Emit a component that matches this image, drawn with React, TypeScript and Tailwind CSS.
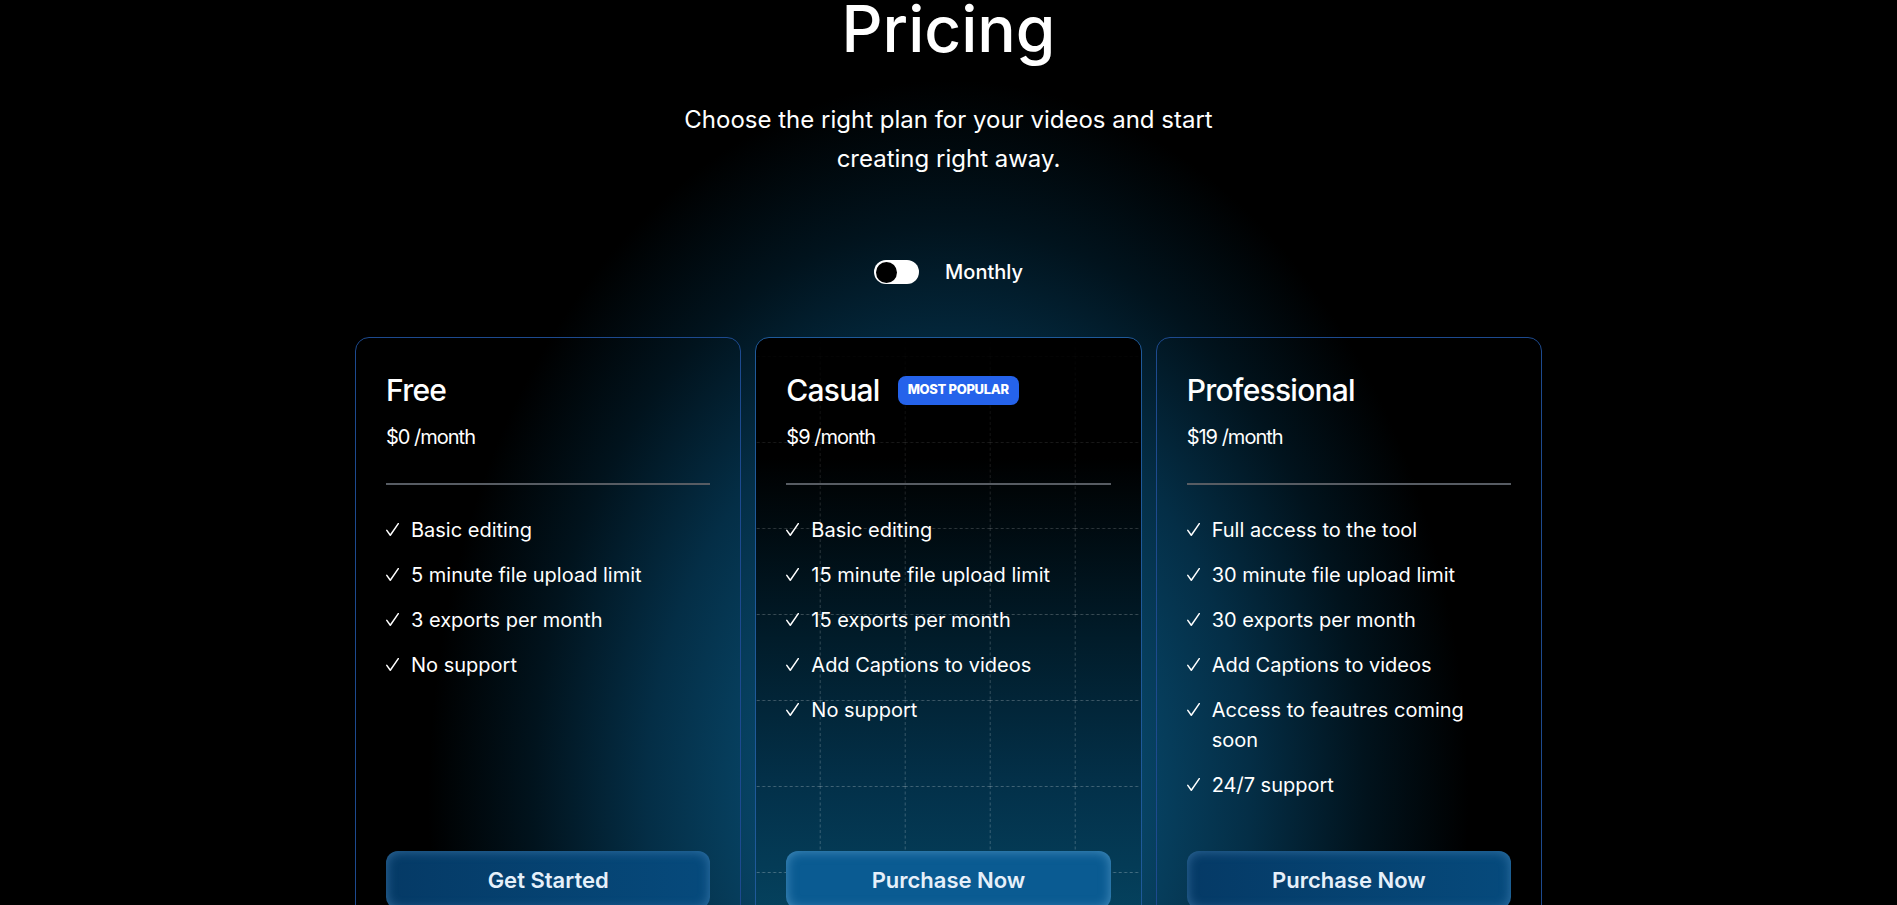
import React, { useState } from "react";

interface Plan {
  name: string;
  price: string;
  features: string[];
  cta: string;
  popular?: boolean;
}

const plans: Plan[] = [
  {
    name: "Free",
    price: "$0",
    features: [
      "Basic editing",
      "5 minute file upload limit",
      "3 exports per month",
      "No support",
    ],
    cta: "Get Started",
  },
  {
    name: "Casual",
    price: "$9",
    popular: true,
    features: [
      "Basic editing",
      "15 minute file upload limit",
      "15 exports per month",
      "Add Captions to videos",
      "No support",
    ],
    cta: "Purchase Now",
  },
  {
    name: "Professional",
    price: "$19",
    features: [
      "Full access to the tool",
      "30 minute file upload limit",
      "30 exports per month",
      "Add Captions to videos",
      "Access to feautres coming soon",
      "24/7 support",
    ],
    cta: "Purchase Now",
  },
];

function Check() {
  return (
    <svg
      width="13"
      height="13"
      viewBox="0 0 13 13"
      className="mt-[8px] mr-[12px] shrink-0"
      fill="none"
    >
      <path
        d="M0.8 7.4 L4.3 12.2 L12.3 0.6"
        stroke="white"
        strokeWidth="1.5"
        strokeLinecap="round"
        strokeLinejoin="round"
      />
    </svg>
  );
}

function GridBackdrop() {
  return (
    <svg className="pointer-events-none absolute inset-0 h-full w-full">
      <defs>
        <pattern
          id="casual-grid"
          width="85"
          height="86"
          x="63.7"
          y="18"
          patternUnits="userSpaceOnUse"
        >
          <line
            x1="0"
            y1="0"
            x2="85"
            y2="0"
            stroke="white"
            strokeOpacity="0.34"
            strokeWidth="1.3"
            strokeDasharray="3 2.5"
          />
          <line
            x1="0"
            y1="0"
            x2="0"
            y2="86"
            stroke="white"
            strokeOpacity="0.34"
            strokeWidth="1.3"
            strokeDasharray="3 2.5"
          />
        </pattern>
        <linearGradient id="grid-fade" x1="0" y1="0" x2="0" y2="1">
          <stop offset="0%" stopColor="white" stopOpacity="0" />
          <stop offset="14%" stopColor="white" stopOpacity="0.3" />
          <stop offset="40%" stopColor="white" stopOpacity="0.85" />
          <stop offset="100%" stopColor="white" stopOpacity="1" />
        </linearGradient>
        <mask id="grid-mask">
          <rect width="100%" height="100%" fill="url(#grid-fade)" />
        </mask>
      </defs>
      <rect
        width="100%"
        height="100%"
        fill="url(#casual-grid)"
        mask="url(#grid-mask)"
      />
    </svg>
  );
}

function PlanCard({ plan }: { plan: Plan }) {
  const featured = !!plan.popular;
  return (
    <div
      className={`relative flex h-[603px] flex-col overflow-hidden rounded-[14px] border px-[30px] pt-[34px] pb-[30px] ${
        featured
          ? "border-[#1f5a9a] bg-[linear-gradient(180deg,#000_0%,#000_20%,#011c2a_50%,#03314a_75%,#054562_100%)]"
          : "border-[#1d4a8f]"
      }`}
    >
      {featured && <GridBackdrop />}
      <div className="relative flex h-9 items-center gap-[18px]">
        <h2 className="text-3xl leading-9 font-medium tracking-tight">
          {plan.name}
        </h2>
        {featured && (
          <span className="flex h-[29px] items-center rounded-lg bg-[#2563eb] px-[10px] text-[13px] font-extrabold tracking-tight">
            MOST POPULAR
          </span>
        )}
      </div>
      <p className="relative mt-[15px] text-xl leading-7 tracking-tighter">
        {plan.price} /month
      </p>
      <div className="relative mt-8 h-[2px] bg-[#575c63]" />
      <ul className="relative mt-[30px] flex flex-col gap-[15px]">
        {plan.features.map((f, i) => (
          <li key={i} className="flex text-xl leading-[30px]">
            <Check />
            <span>{f}</span>
          </li>
        ))}
      </ul>
      <button
        className={`relative mt-auto h-[58px] w-full rounded-xl text-[22px] font-semibold text-[#e6f0fa] ${
          featured
            ? "bg-[#0a5b92] shadow-[inset_0_0_12px_rgba(140,200,240,0.5)]"
            : "bg-[linear-gradient(90deg,#053a66,#064a7c)] shadow-[inset_0_0_12px_rgba(110,170,225,0.45)]"
        }`}
      >
        {plan.cta}
      </button>
    </div>
  );
}

export default function App() {
  const [yearly, setYearly] = useState(false);

  return (
    <div className="relative h-[905px] w-full overflow-hidden bg-black bg-[radial-gradient(ellipse_520px_720px_at_50%_800px,#0c6189_0%,#084b6f_28%,#042e46_58%,#01131d_80%,transparent_100%)] font-[family-name:Inter,sans-serif] text-white">
      <div className="flex flex-col items-center">
        <h1 className="mt-[-3px] text-[64px] leading-[64px] font-medium">
          Pricing
        </h1>
        <p className="mt-[39px] max-w-xl text-center text-2xl leading-[39px]">
          Choose the right plan for your videos and start creating right away.
        </p>
        <div className="mt-[80px] flex items-center gap-[26px]">
          <button
            onClick={() => setYearly(!yearly)}
            className={`flex h-6 w-[45px] items-center rounded-full bg-white px-[1.5px] ${
              yearly ? "justify-end" : "justify-start"
            }`}
          >
            <span className="h-[21px] w-[21px] rounded-full bg-black" />
          </button>
          <span className="text-xl leading-7 font-medium">
            {yearly ? "Yearly" : "Monthly"}
          </span>
        </div>
        <div className="mt-[51px] grid w-[1187px] grid-cols-3 gap-[14px]">
          {plans.map((p) => (
            <PlanCard key={p.name} plan={p} />
          ))}
        </div>
      </div>
    </div>
  );
}
